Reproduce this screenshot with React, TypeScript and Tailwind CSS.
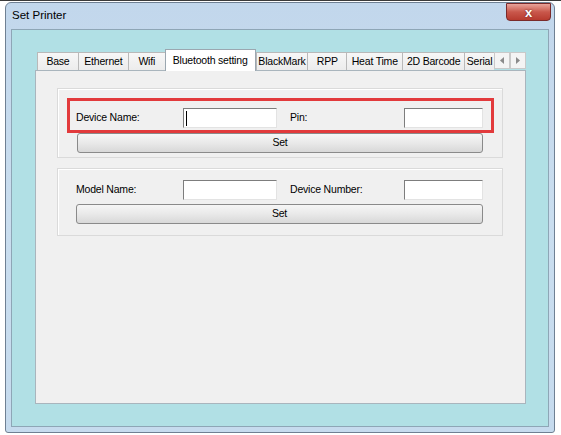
import React from 'react';

const tabs = [
    { label: 'Base', w: 'w-[41px]' },
    { label: 'Ethernet', w: 'w-[50px]' },
    { label: 'Wifi', w: 'w-[37px]' },
    { label: 'Bluetooth setting', w: 'w-[91px]', active: true },
    { label: 'BlackMark', w: 'w-[52px]' },
    { label: 'RPP', w: 'w-[39px]' },
    { label: 'Heat Time', w: 'w-[56px]' },
    { label: '2D Barcode', w: 'w-[62px]' },
    { label: 'Serial', w: 'w-[30px]' },
];

function TextBox({ w, caret }: { w: string; caret?: boolean }) {
    return (
        <div
            className={`${w} h-[20px] bg-white border border-t-[#7d7d7d] border-l-[#7d7d7d] border-b-[#e3e3e3] border-r-[#e3e3e3] flex items-center`}
        >
            {caret && <div className="ml-[2px] w-px h-[15px] bg-black" />}
        </div>
    );
}

function SetButton({ w }: { w: string }) {
    return (
        <div
            className={`${w} h-[20px] rounded-[3px] border border-[#8a8a8a] bg-gradient-to-b from-[#f6f6f6] via-[#e9e9e9] to-[#d8d8d8] flex items-center justify-center text-[10.5px] tracking-[-0.2px] text-black`}
        >
            Set
        </div>
    );
}

function Arrow({ dir }: { dir: 'left' | 'right' }) {
    return (
        <div className="w-[16px] h-[17px] border border-[#c9c9c9] bg-[#f4f4f4] flex items-center justify-center">
            <svg width="4" height="7" viewBox="0 0 4 7">
                {dir === 'left' ? (
                    <path d="M4 0 L0 3.5 L4 7 Z" fill="#8a8a8a" />
                ) : (
                    <path d="M0 0 L4 3.5 L0 7 Z" fill="#8a8a8a" />
                )}
            </svg>
        </div>
    );
}

export default function App() {
    return (
        <div
            className="w-[561px] h-[435px] bg-white overflow-hidden border-t border-[#3a3a3a]"
            style={{ fontFamily: '"Liberation Sans", Arial, sans-serif' }}
        >
            {/* Window */}
            <div className="relative ml-[5px] mt-[1px] w-[550px] h-[431px] rounded-t-[6px] rounded-b-[3px] border border-[#6f8093] bg-gradient-to-b from-[#c2d7ec] via-[#cadeef] to-[#c6dbee] flex flex-col">
                {/* Title bar */}
                <div className="h-[26px] flex items-center pl-[6px] text-[11.5px] text-black">Set Printer</div>

                {/* Close button */}
                <div className="absolute top-0 right-[3px] w-[45px] h-[18px] rounded-b-[4px] border border-[#7a2a2a] bg-gradient-to-b from-[#e8a39a] via-[#c9574b] to-[#b73b2f] flex items-center justify-center">
                    <span className="text-white font-bold text-[13px] leading-none [text-shadow:0_0_2px_#5a1a1a]">x</span>
                </div>

                {/* Client area */}
                <div className="ml-[5px] w-[538px] h-[398px] border border-[#8ea6b6] bg-[#b1e0e5] pl-[23px] pt-[19px]">
                    {/* Tab control */}
                    <div className="w-[491px]">
                        <div className="h-[21px] flex items-end pl-[2px] relative z-10 text-[10.5px] tracking-[-0.2px] text-black">
                            {tabs.map((t) =>
                                t.active ? (
                                    <div
                                        key={t.label}
                                        className={`${t.w} h-[22px] -mb-px bg-white border border-b-0 border-[#9ba7b0] flex items-start justify-center pt-[3px] whitespace-nowrap`}
                                    >
                                        {t.label}
                                    </div>
                                ) : (
                                    <div
                                        key={t.label}
                                        className={`${t.w} h-[18px] bg-gradient-to-b from-[#f7f7f7] to-[#ececec] border-t border-l border-[#b9b9b9] flex items-center justify-center whitespace-nowrap overflow-hidden`}
                                    >
                                        {t.label}
                                    </div>
                                ),
                            )}
                            <div className="flex items-center self-start mt-[3px]">
                                <Arrow dir="left" />
                                <Arrow dir="right" />
                            </div>
                        </div>

                        {/* Tab page */}
                        <div className="h-[334px] bg-[#f0f0f0] border border-[#a9b5bd] pl-[21px] pt-[17px] flex flex-col gap-[10px]">
                            {/* Group 1 */}
                            <div className="relative w-[446px] h-[70px] border border-[#dadada] shadow-[inset_1px_1px_0_#ffffff] pt-[19px] flex flex-col gap-[5px]">
                                <div className="flex items-center pl-[18px] text-[10.5px] tracking-[-0.2px] text-black">
                                    <div className="w-[107px]">Device Name:</div>
                                    <TextBox w="w-[94px]" caret />
                                    <div className="w-[114px] ml-[13px]">Pin:</div>
                                    <TextBox w="w-[79px]" />
                                </div>
                                <div className="pl-[19px]">
                                    <SetButton w="w-[406px]" />
                                </div>
                                {/* Highlight */}
                                <div className="absolute left-[9px] top-[9px] w-[427px] h-[35px] border-[3px] border-[#e23a3c]" />
                            </div>

                            {/* Group 2 */}
                            <div className="w-[446px] h-[68px] border border-[#dadada] shadow-[inset_1px_1px_0_#ffffff] pt-[11px] flex flex-col gap-[4px]">
                                <div className="flex items-center pl-[18px] text-[10.5px] tracking-[-0.2px] text-black">
                                    <div className="w-[107px]">Model Name:</div>
                                    <TextBox w="w-[94px]" />
                                    <div className="w-[114px] ml-[13px]">Device Number:</div>
                                    <TextBox w="w-[79px]" />
                                </div>
                                <div className="pl-[18px]">
                                    <SetButton w="w-[407px]" />
                                </div>
                            </div>
                        </div>
                    </div>
                </div>
            </div>
        </div>
    );
}
